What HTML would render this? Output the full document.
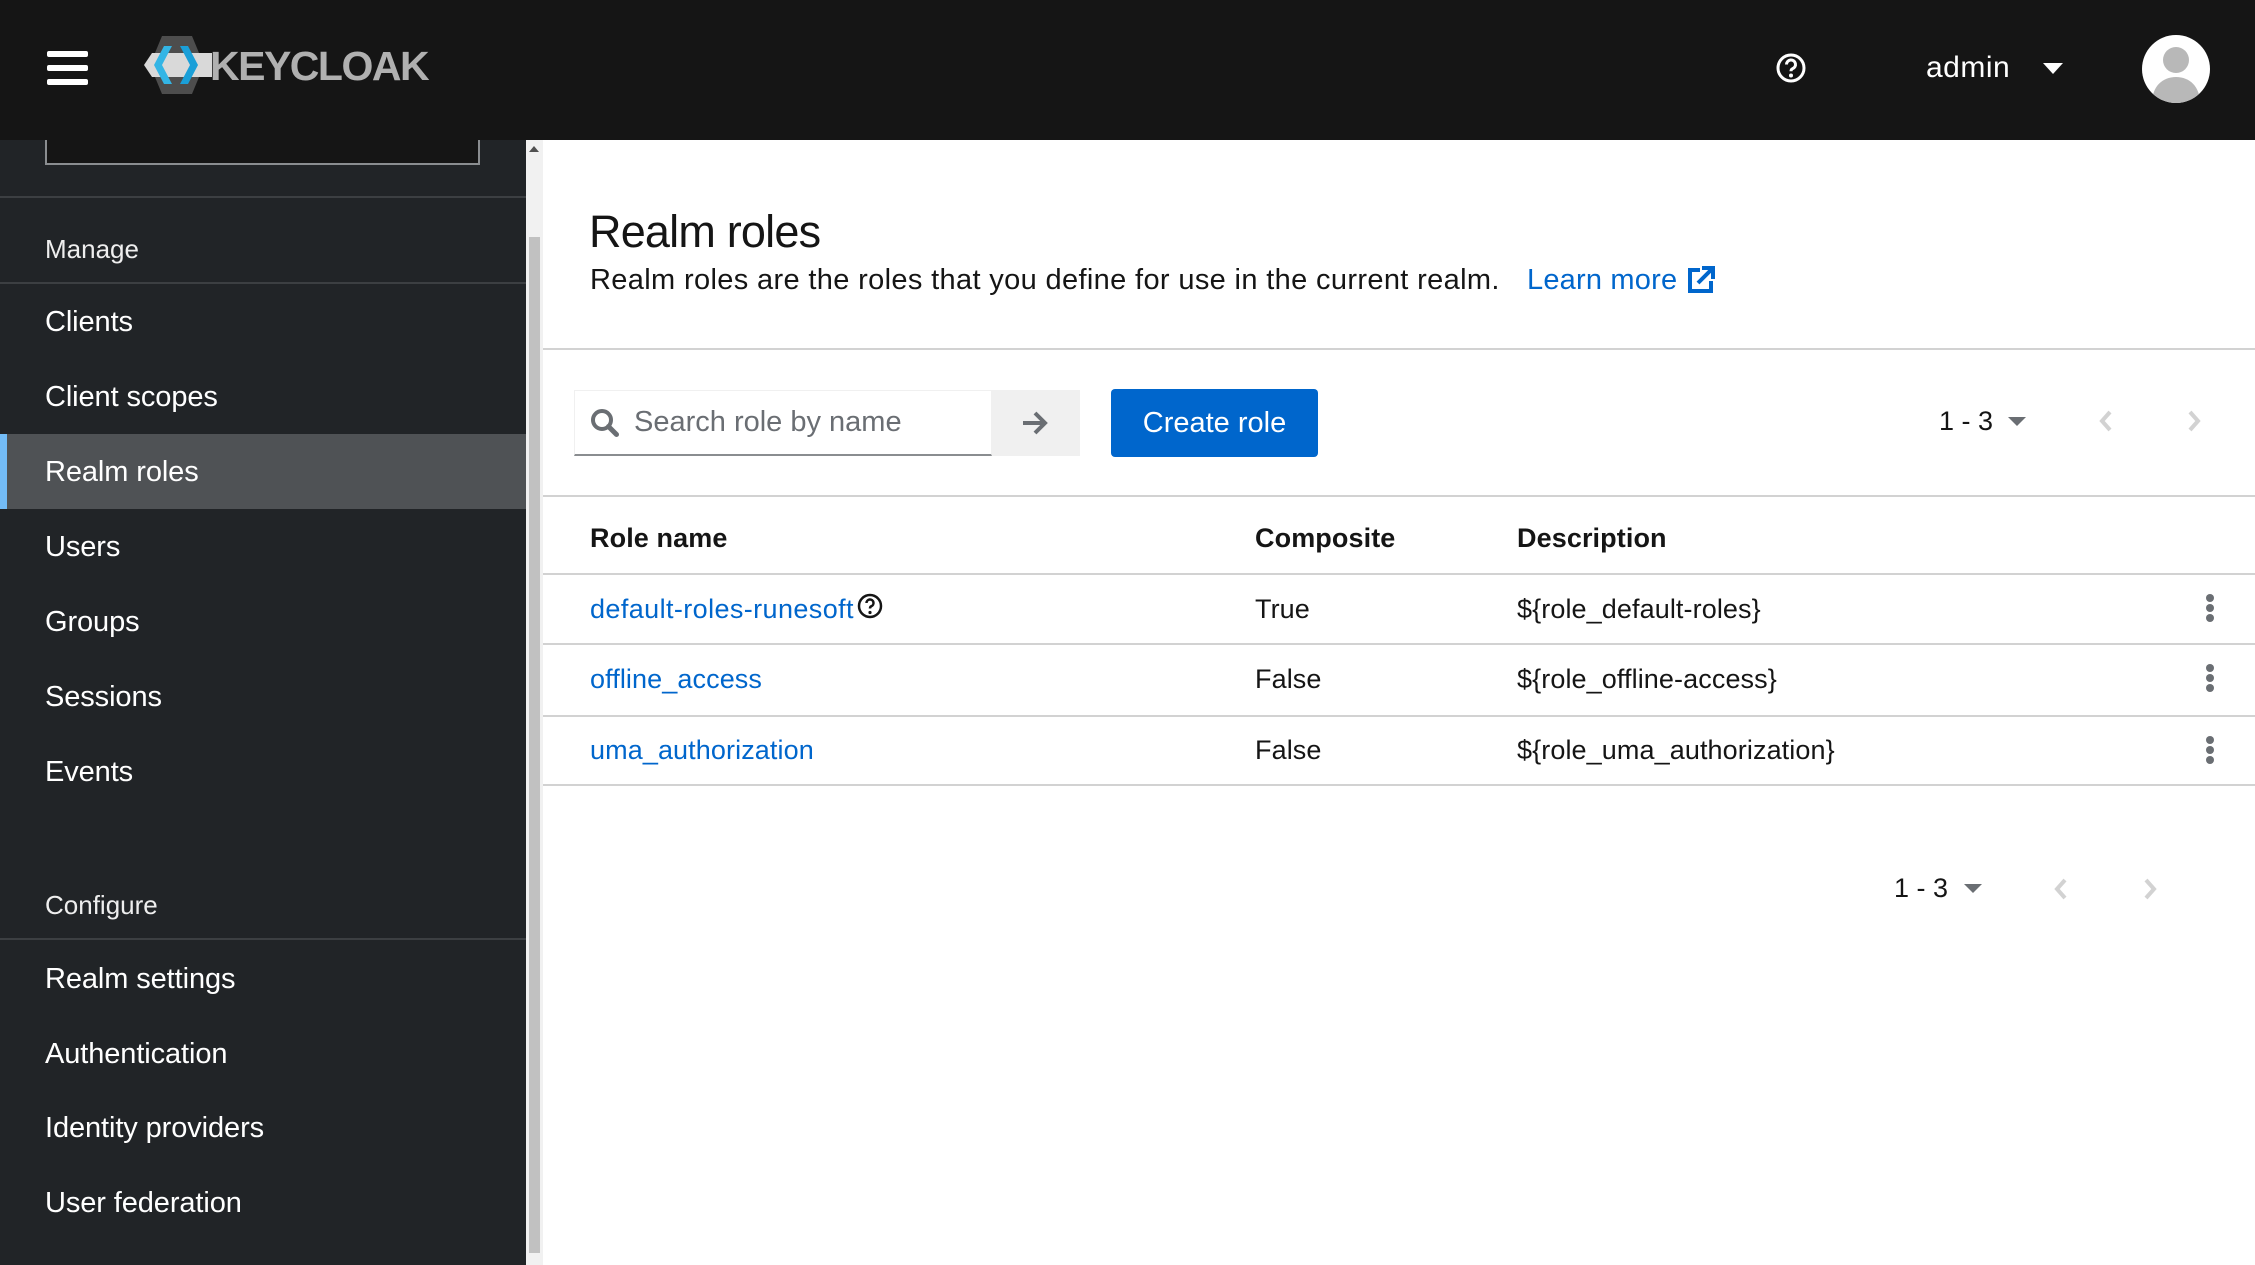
<!DOCTYPE html>
<html><head><meta charset="utf-8"><style>
*{margin:0;padding:0;box-sizing:border-box}
body{width:2255px;height:1265px;overflow:hidden;background:#fff;font-family:"Liberation Sans",sans-serif;position:relative;color:#151515}
.a{position:absolute;white-space:nowrap}
#hdr{position:absolute;left:0;top:0;width:2255px;height:140px;background:#151515}
#side{position:absolute;left:0;top:140px;width:526px;height:1125px;background:#212427}
.nav{position:absolute;left:45px;color:#fff;font-size:29px;letter-spacing:-0.1px;margin-top:3px}
.sec{position:absolute;left:45px;color:#eee;font-size:26px;margin-top:2px}
.hl{position:absolute;left:0;width:526px;height:2px;background:#3c3f42}
.line{position:absolute;left:543px;width:1712px;height:2px;background:#d2d2d2}
.t{font-size:27px;letter-spacing:0.1px}
.lnk{color:#0066cc}
.keb{position:absolute;left:2206px;width:8px}
.keb i{display:block;width:8px;height:8px;border-radius:50%;background:#6a6e73;margin-bottom:2px}
</style></head><body>
<div id="hdr">
 <div class="a" style="left:47px;top:51px;width:41px;height:6px;background:#fff;border-radius:2px"></div>
 <div class="a" style="left:47px;top:65px;width:41px;height:6px;background:#fff;border-radius:2px"></div>
 <div class="a" style="left:47px;top:79px;width:41px;height:6px;background:#fff;border-radius:2px"></div>
 <svg class="a" style="left:144px;top:36px" width="68" height="58" viewBox="0 0 68 58">
  <polygon points="18,0 48,0 60,29 48,58 18,58 6,29" fill="#4d4d4d"/>
  <polygon points="0,29 8,17 68,17 68,41 8,41" fill="#d9d9d9"/>
  <polygon points="20,10 28,10 18,29 28,48 20,48 10,29" fill="#33b5e5"/>
  <polygon points="36,10 44,10 54,29 44,48 36,48 46,29" fill="#1a9fd8"/>
 </svg>
 <div class="a" style="left:210px;top:43px;font-size:41px;font-weight:bold;color:#b0b0b0;letter-spacing:-1.5px">KEYCLOAK</div>
 <svg class="a" style="left:1775px;top:52px" width="32" height="32" viewBox="0 0 32 32"><circle cx="16" cy="16" r="13" fill="none" stroke="#fff" stroke-width="3"/><path d="M11.5 12.5a4.5 4.5 0 1 1 6 4.2c-1.2.5-1.5 1.2-1.5 2.6" fill="none" stroke="#fff" stroke-width="3"/><circle cx="16" cy="23.5" r="2" fill="#fff"/></svg>
 <div class="a" style="left:1926px;top:51px;font-size:30px;color:#fff;letter-spacing:0.5px">admin</div>
 <div class="a" style="left:2043px;top:63px;width:0;height:0;border-left:10px solid transparent;border-right:10px solid transparent;border-top:11px solid #fff"></div>
 <svg class="a" style="left:2142px;top:35px" width="68" height="68" viewBox="0 0 68 68"><defs><clipPath id="c"><circle cx="34" cy="34" r="34"/></clipPath></defs><circle cx="34" cy="34" r="34" fill="#fff"/><g clip-path="url(#c)"><circle cx="34" cy="25" r="13" fill="#b8b8b8"/><path d="M10 68c0-16 10-26 24-26s24 10 24 26z" fill="#b8b8b8"/></g></svg>
</div>
<div id="side">
 <div class="a" style="left:45px;top:0;width:435px;height:25px;border:2px solid #8a8d90;border-top:none;background:#151515"></div>
 <div class="hl" style="top:56px"></div>
 <div class="sec" style="top:92px">Manage</div>
 <div class="hl" style="top:142px"></div>
 <div class="nav" style="top:163px">Clients</div>
 <div class="nav" style="top:238px">Client scopes</div>
 <div class="a" style="left:0;top:294px;width:526px;height:75px;background:#4f5255"></div>
 <div class="a" style="left:0;top:294px;width:7px;height:75px;background:#73bcf7"></div>
 <div class="nav" style="top:313px">Realm roles</div>
 <div class="nav" style="top:388px">Users</div>
 <div class="nav" style="top:463px">Groups</div>
 <div class="nav" style="top:538px">Sessions</div>
 <div class="nav" style="top:613px">Events</div>
 <div class="sec" style="top:748px">Configure</div>
 <div class="hl" style="top:798px"></div>
 <div class="nav" style="top:820px">Realm settings</div>
 <div class="nav" style="top:895px">Authentication</div>
 <div class="nav" style="top:969px">Identity providers</div>
 <div class="nav" style="top:1044px">User federation</div>
</div>
<div class="a" style="left:526px;top:140px;width:17px;height:1125px;background:#f1f1f1"></div>
<div class="a" style="left:529px;top:237px;width:11px;height:1016px;background:#c1c1c1"></div>
<div class="a" style="left:529px;top:146px;width:0;height:0;border-left:5px solid transparent;border-right:5px solid transparent;border-bottom:6px solid #505050"></div>

<div class="a" style="left:589px;top:206px;font-size:45px;letter-spacing:-0.8px">Realm roles</div>
<div class="a" style="left:590px;top:264px;font-size:29px;letter-spacing:0.35px">Realm roles are the roles that you define for use in the current realm.</div>
<div class="a lnk" style="left:1527px;top:264px;font-size:29px;letter-spacing:0.2px">Learn more</div>
<svg class="a" style="left:1686px;top:265px" width="30" height="30" viewBox="0 0 30 30"><path d="M14 5H4v21h21V16" fill="none" stroke="#0066cc" stroke-width="4"/><path d="M12 18L26 4M16 3h11v11" fill="none" stroke="#0066cc" stroke-width="4"/></svg>
<div class="line" style="top:348px"></div>

<div class="a" style="left:574px;top:390px;width:418px;height:66px;border:1px solid #f0f0f0;border-bottom:2px solid #8a8d90"></div>
<svg class="a" style="left:589px;top:407px" width="32" height="32" viewBox="0 0 32 32"><circle cx="13" cy="13" r="9" fill="none" stroke="#6a6e73" stroke-width="4"/><path d="M19.5 19.5l8 8" stroke="#6a6e73" stroke-width="5" stroke-linecap="round"/></svg>
<div class="a" style="left:634px;top:406px;font-size:29px;color:#6a6e73;letter-spacing:0px">Search role by name</div>
<div class="a" style="left:992px;top:390px;width:88px;height:66px;background:#f0f0f0"></div>
<svg class="a" style="left:1020px;top:408px" width="30" height="30" viewBox="0 0 30 30"><path d="M3 15h21M15 5l10 10-10 10" fill="none" stroke="#6a6e73" stroke-width="4"/></svg>
<div class="a" style="left:1111px;top:389px;width:207px;height:68px;background:#0066cc;border-radius:4px;color:#fff;font-size:29px;text-align:center;line-height:68px;letter-spacing:0px">Create role</div>

<div class="a" style="left:1939px;top:406px;font-size:27px">1 - 3</div>
<div class="a" style="left:2008px;top:417px;border-left:9px solid transparent;border-right:9px solid transparent;border-top:9px solid #6a6e73"></div>
<svg class="a" style="left:2098px;top:409px" width="16" height="24" viewBox="0 0 16 24"><path d="M12 3L4 12l8 9" fill="none" stroke="#d2d2d2" stroke-width="4"/></svg>
<svg class="a" style="left:2186px;top:409px" width="16" height="24" viewBox="0 0 16 24"><path d="M4 3l8 9-8 9" fill="none" stroke="#d2d2d2" stroke-width="4"/></svg>
<div class="line" style="top:495px"></div>

<div class="a t" style="left:590px;top:523px;font-weight:bold">Role name</div>
<div class="a t" style="left:1255px;top:523px;font-weight:bold">Composite</div>
<div class="a t" style="left:1517px;top:523px;font-weight:bold">Description</div>
<div class="line" style="top:573px"></div>

<div class="a t lnk" style="left:590px;top:594px;letter-spacing:0.4px">default-roles-runesoft</div>
<svg class="a" style="left:857px;top:593px" width="26" height="26" viewBox="0 0 26 26"><circle cx="13" cy="13" r="11" fill="none" stroke="#151515" stroke-width="2.5"/><path d="M9.5 10a3.5 3.5 0 1 1 4.7 3.3c-.9.4-1.2 1-1.2 2.2" fill="none" stroke="#151515" stroke-width="2.5"/><circle cx="13" cy="19.5" r="1.6" fill="#151515"/></svg>
<div class="a t" style="left:1255px;top:594px">True</div>
<div class="a t" style="left:1517px;top:594px">${role_default-roles}</div>
<div class="keb" style="top:594px"><i></i><i></i><i></i></div>
<div class="line" style="top:643px"></div>

<div class="a t lnk" style="left:590px;top:664px">offline_access</div>
<div class="a t" style="left:1255px;top:664px">False</div>
<div class="a t" style="left:1517px;top:664px">${role_offline-access}</div>
<div class="keb" style="top:664px"><i></i><i></i><i></i></div>
<div class="line" style="top:715px"></div>

<div class="a t lnk" style="left:590px;top:735px">uma_authorization</div>
<div class="a t" style="left:1255px;top:735px">False</div>
<div class="a t" style="left:1517px;top:735px">${role_uma_authorization}</div>
<div class="keb" style="top:736px"><i></i><i></i><i></i></div>
<div class="line" style="top:784px"></div>

<div class="a" style="left:1894px;top:873px;font-size:27px">1 - 3</div>
<div class="a" style="left:1964px;top:884px;border-left:9px solid transparent;border-right:9px solid transparent;border-top:9px solid #6a6e73"></div>
<svg class="a" style="left:2053px;top:877px" width="16" height="24" viewBox="0 0 16 24"><path d="M12 3L4 12l8 9" fill="none" stroke="#d2d2d2" stroke-width="4"/></svg>
<svg class="a" style="left:2142px;top:877px" width="16" height="24" viewBox="0 0 16 24"><path d="M4 3l8 9-8 9" fill="none" stroke="#d2d2d2" stroke-width="4"/></svg>
</body></html>
